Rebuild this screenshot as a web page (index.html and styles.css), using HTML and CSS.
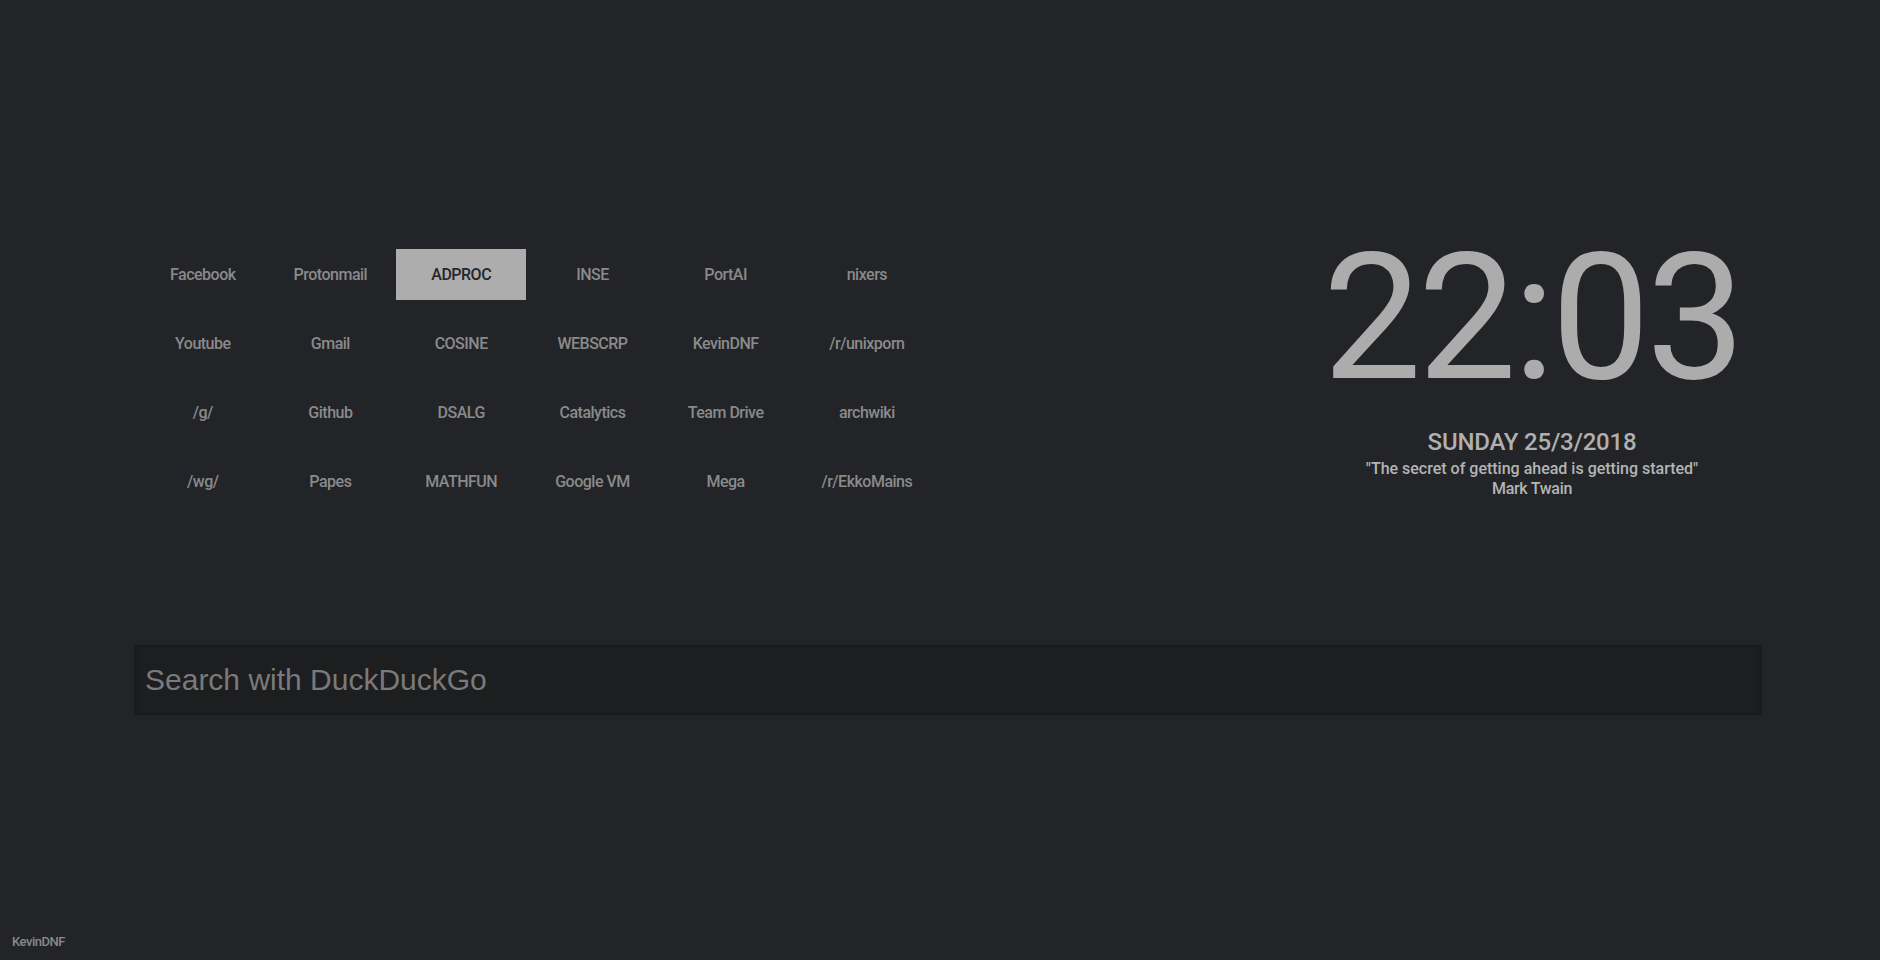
FILE: index.html
```html
<!DOCTYPE html>
<html lang="en">
<head>
<meta charset="utf-8">
<title>Start</title>
<link rel="stylesheet" href="styles.css">
</head>
<body>
<div class="page">
  <main class="main">
    <section class="top">
      <nav class="links">
        <a class="link" href="#">Facebook</a>
        <a class="link" href="#">Protonmail</a>
        <a class="link active" href="#">ADPROC</a>
        <a class="link" href="#">INSE</a>
        <a class="link" href="#">PortAI</a>
        <a class="link" href="#">nixers</a>
        <a class="link" href="#">Youtube</a>
        <a class="link" href="#">Gmail</a>
        <a class="link" href="#">COSINE</a>
        <a class="link" href="#">WEBSCRP</a>
        <a class="link" href="#">KevinDNF</a>
        <a class="link" href="#">/r/unixporn</a>
        <a class="link" href="#">/g/</a>
        <a class="link" href="#">Github</a>
        <a class="link" href="#">DSALG</a>
        <a class="link" href="#">Catalytics</a>
        <a class="link" href="#">Team Drive</a>
        <a class="link" href="#">archwiki</a>
        <a class="link" href="#">/wg/</a>
        <a class="link" href="#">Papes</a>
        <a class="link" href="#">MATHFUN</a>
        <a class="link" href="#">Google VM</a>
        <a class="link" href="#">Mega</a>
        <a class="link" href="#">/r/EkkoMains</a>
      </nav>
      <div class="clockbox">
        <div class="clock">22:03</div>
        <div class="date">SUNDAY 25/3/2018</div>
        <div class="quote">"The secret of getting ahead is getting started"</div>
        <div class="author">Mark Twain</div>
      </div>
    </section>
    <form class="search">
      <input class="search-input" type="text" placeholder="Search with DuckDuckGo">
    </form>
  </main>
  <footer class="footer">KevinDNF</footer>
</div>
</body>
</html>
```

FILE: styles.css
```css
* { box-sizing: border-box; }

html, body {
  margin: 0;
  padding: 0;
  background: #232428;
  height: 100%;
}

body {
  font-family: Roboto, "Noto Sans", "Liberation Sans", sans-serif;
  color: #8a8a8a;
}

.page {
  min-height: 100vh;
  display: flex;
  flex-direction: column;
}

.main {
  padding: 230px 118px 0 134px;
}

.top {
  display: flex;
  justify-content: space-between;
  align-items: flex-start;
}

.links {
  display: grid;
  grid-template-columns: repeat(6, auto);
  row-gap: 18px;
  column-gap: 0;
  margin-top: 19px;
  margin-left: 7px;
}

.link {
  display: block;
  height: 51px;
  line-height: 51px;
  padding: 0 29px;
  text-align: center;
  text-decoration: none;
  color: #8a8a8a;
  font-size: 16px;
  font-weight: 500;
  letter-spacing: -0.5px;
  white-space: nowrap;
}

.link.active {
  background: #adadad;
  color: #25262a;
}

.clockbox {
  width: 460px;
  text-align: center;
  color: #adadad;
}

.clock {
  font-size: 176px;
  line-height: 176px;
  letter-spacing: -4px;
  font-weight: 400;
  color: #acacac;
}

.date {
  margin-top: 22px;
  font-size: 24px;
  line-height: 28px;
  letter-spacing: -0.2px;
  font-weight: 500;
  color: #b0b0b0;
}

.quote {
  margin-top: 4px;
  font-size: 16px;
  line-height: 18px;
  letter-spacing: 0;
  font-weight: 500;
  color: #b4b4b4;
}

.author {
  margin-top: 2px;
  font-size: 16px;
  line-height: 18px;
  letter-spacing: -0.3px;
  font-weight: 500;
  color: #b4b4b4;
}

.search {
  margin-top: 138px;
}

.search-input {
  display: block;
  width: 100%;
  height: 70px;
  border: none;
  outline: none;
  background: #1d1e20;
  box-shadow: inset 0 0 5px rgba(0, 0, 0, 0.25);
  padding: 0 11px;
  font-family: "Liberation Sans", Arial, sans-serif;
  font-size: 30px;
  color: #7a7a7a;
}

.search-input::placeholder {
  color: #7a7a7a;
  opacity: 1;
}

.footer {
  margin-top: auto;
  padding: 0 0 10px 12px;
  font-size: 13px;
  line-height: 16px;
  letter-spacing: -0.5px;
  font-weight: 500;
  color: #8a8a8a;
}
```
